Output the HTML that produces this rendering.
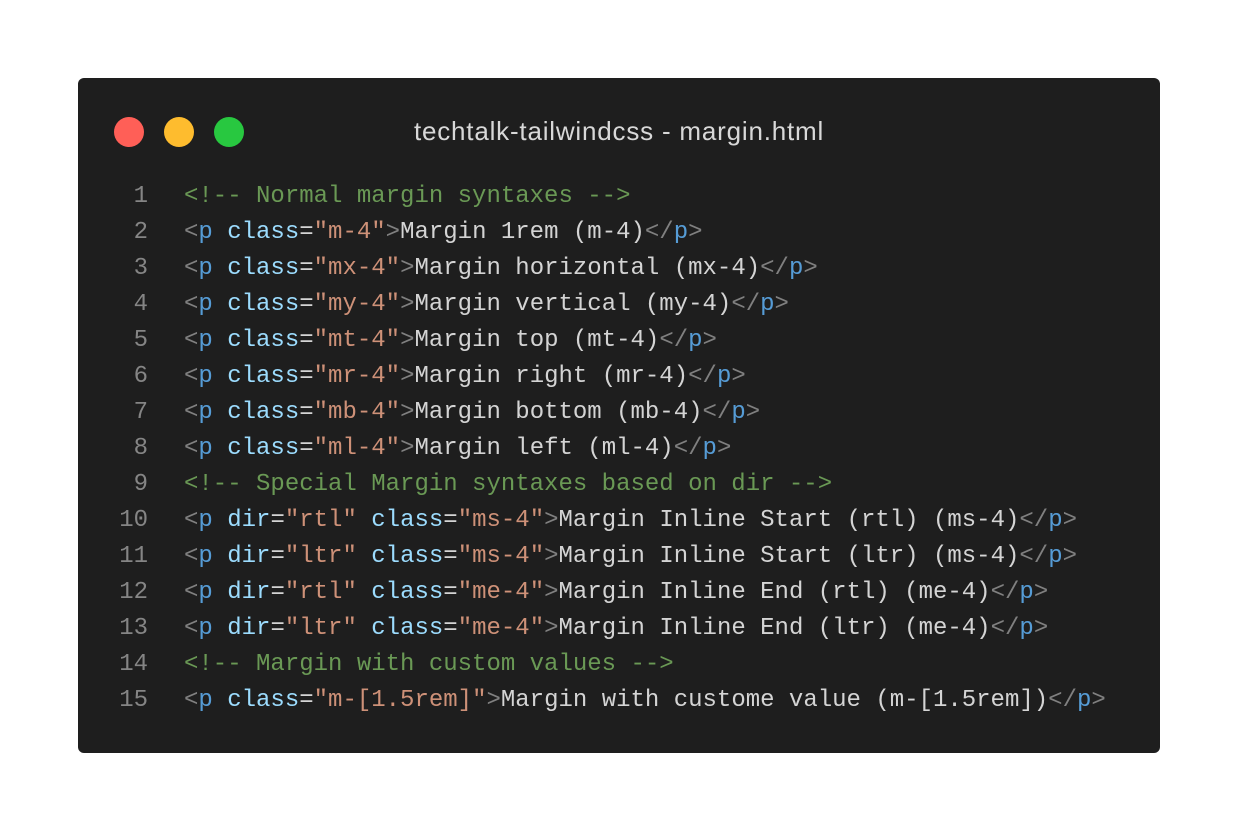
<!DOCTYPE html>
<html><head><style>
body{margin:0;width:1238px;height:832px;background:#fff;position:relative;overflow:hidden}
.win{position:absolute;left:78px;top:78px;width:1082px;height:675px;background:#1e1e1e;border-radius:6px}
.dot{position:absolute;top:39px;width:30px;height:30px;border-radius:50%}
.title{position:absolute;left:0;right:0;top:38px;text-align:center;font-family:"Liberation Sans",sans-serif;font-size:26px;letter-spacing:0.8px;color:#d8d8d8}
.code{position:absolute;left:0;top:101px;font-family:"Liberation Mono",monospace;font-size:24px;line-height:36px;color:#d4d4d4;white-space:pre}
.ln{display:inline-block;width:70px;text-align:right;color:#858585;margin-right:36px}
.c{color:#6a9955}.t{color:#569cd6}.a{color:#9cdcfe}.s{color:#ce9178}.p{color:#808080}
</style></head><body>
<div class="win">
<div class="dot" style="left:36px;background:#ff5f57"></div>
<div class="dot" style="left:86px;background:#febc2e"></div>
<div class="dot" style="left:136px;background:#28c840"></div>
<div class="title">techtalk-tailwindcss - margin.html</div>
<div class="code"><span class="ln">1</span><span class="c">&lt;!-- Normal margin syntaxes --&gt;</span>
<span class="ln">2</span><span class="p">&lt;</span><span class="t">p</span> <span class="a">class</span>=<span class="s">"m-4"</span><span class="p">&gt;</span>Margin 1rem (m-4)<span class="p">&lt;/</span><span class="t">p</span><span class="p">&gt;</span>
<span class="ln">3</span><span class="p">&lt;</span><span class="t">p</span> <span class="a">class</span>=<span class="s">"mx-4"</span><span class="p">&gt;</span>Margin horizontal (mx-4)<span class="p">&lt;/</span><span class="t">p</span><span class="p">&gt;</span>
<span class="ln">4</span><span class="p">&lt;</span><span class="t">p</span> <span class="a">class</span>=<span class="s">"my-4"</span><span class="p">&gt;</span>Margin vertical (my-4)<span class="p">&lt;/</span><span class="t">p</span><span class="p">&gt;</span>
<span class="ln">5</span><span class="p">&lt;</span><span class="t">p</span> <span class="a">class</span>=<span class="s">"mt-4"</span><span class="p">&gt;</span>Margin top (mt-4)<span class="p">&lt;/</span><span class="t">p</span><span class="p">&gt;</span>
<span class="ln">6</span><span class="p">&lt;</span><span class="t">p</span> <span class="a">class</span>=<span class="s">"mr-4"</span><span class="p">&gt;</span>Margin right (mr-4)<span class="p">&lt;/</span><span class="t">p</span><span class="p">&gt;</span>
<span class="ln">7</span><span class="p">&lt;</span><span class="t">p</span> <span class="a">class</span>=<span class="s">"mb-4"</span><span class="p">&gt;</span>Margin bottom (mb-4)<span class="p">&lt;/</span><span class="t">p</span><span class="p">&gt;</span>
<span class="ln">8</span><span class="p">&lt;</span><span class="t">p</span> <span class="a">class</span>=<span class="s">"ml-4"</span><span class="p">&gt;</span>Margin left (ml-4)<span class="p">&lt;/</span><span class="t">p</span><span class="p">&gt;</span>
<span class="ln">9</span><span class="c">&lt;!-- Special Margin syntaxes based on dir --&gt;</span>
<span class="ln">10</span><span class="p">&lt;</span><span class="t">p</span> <span class="a">dir</span>=<span class="s">"rtl"</span> <span class="a">class</span>=<span class="s">"ms-4"</span><span class="p">&gt;</span>Margin Inline Start (rtl) (ms-4)<span class="p">&lt;/</span><span class="t">p</span><span class="p">&gt;</span>
<span class="ln">11</span><span class="p">&lt;</span><span class="t">p</span> <span class="a">dir</span>=<span class="s">"ltr"</span> <span class="a">class</span>=<span class="s">"ms-4"</span><span class="p">&gt;</span>Margin Inline Start (ltr) (ms-4)<span class="p">&lt;/</span><span class="t">p</span><span class="p">&gt;</span>
<span class="ln">12</span><span class="p">&lt;</span><span class="t">p</span> <span class="a">dir</span>=<span class="s">"rtl"</span> <span class="a">class</span>=<span class="s">"me-4"</span><span class="p">&gt;</span>Margin Inline End (rtl) (me-4)<span class="p">&lt;/</span><span class="t">p</span><span class="p">&gt;</span>
<span class="ln">13</span><span class="p">&lt;</span><span class="t">p</span> <span class="a">dir</span>=<span class="s">"ltr"</span> <span class="a">class</span>=<span class="s">"me-4"</span><span class="p">&gt;</span>Margin Inline End (ltr) (me-4)<span class="p">&lt;/</span><span class="t">p</span><span class="p">&gt;</span>
<span class="ln">14</span><span class="c">&lt;!-- Margin with custom values --&gt;</span>
<span class="ln">15</span><span class="p">&lt;</span><span class="t">p</span> <span class="a">class</span>=<span class="s">"m-[1.5rem]"</span><span class="p">&gt;</span>Margin with custome value (m-[1.5rem])<span class="p">&lt;/</span><span class="t">p</span><span class="p">&gt;</span></div>
</div>
</body></html>
